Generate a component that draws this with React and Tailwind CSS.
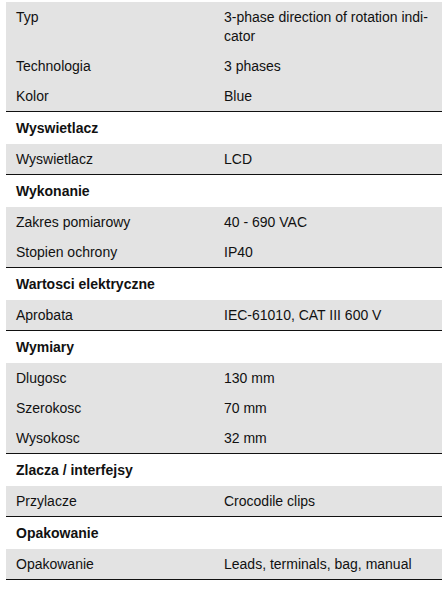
import React from 'react';

const sections = [
  {
    title: null,
    rows: [
      ['Typ', '3-phase direction of rotation indi\u00ADcator'],
      ['Technologia', '3 phases'],
      ['Kolor', 'Blue'],
    ],
  },
  { title: 'Wyswietlacz', rows: [['Wyswietlacz', 'LCD']] },
  {
    title: 'Wykonanie',
    rows: [
      ['Zakres pomiarowy', '40 - 690 VAC'],
      ['Stopien ochrony', 'IP40'],
    ],
  },
  { title: 'Wartosci elektryczne', rows: [['Aprobata', 'IEC-61010, CAT III 600 V']] },
  {
    title: 'Wymiary',
    rows: [
      ['Dlugosc', '130 mm'],
      ['Szerokosc', '70 mm'],
      ['Wysokosc', '32 mm'],
    ],
  },
  { title: 'Zlacza / interfejsy', rows: [['Przylacze', 'Crocodile clips']] },
  { title: 'Opakowanie', rows: [['Opakowanie', 'Leads, terminals, bag, manual']] },
];

const Row = ({ label, value }) => (
  <div className="grid grid-cols-[208px_1fr]">
    <div className="pl-[10px] pt-[6px] pb-[5px] leading-[19px]">{label}</div>
    <div className="pl-[10px] pr-[5px] pt-[6px] pb-[5px] leading-[19px] hyphens-manual">{value}</div>
  </div>
);

export default function App() {
  return (
    <div className="bg-white min-h-screen pl-[6px] pr-[5px] pt-[2px] text-[14px] text-[#111]" style={{ fontFamily: '"Liberation Sans", Arial, sans-serif' }}>
      {sections.map((s, i) => (
        <div key={i}>
          {s.title && (
            <div className="h-[32px] flex items-center pl-[10px] font-bold">{s.title}</div>
          )}
          <div className="bg-[#e3e3e3] border-b border-[#111]">
            {s.rows.map(([l, v]) => (
              <Row key={l} label={l} value={v} />
            ))}
          </div>
        </div>
      ))}
    </div>
  );
}
